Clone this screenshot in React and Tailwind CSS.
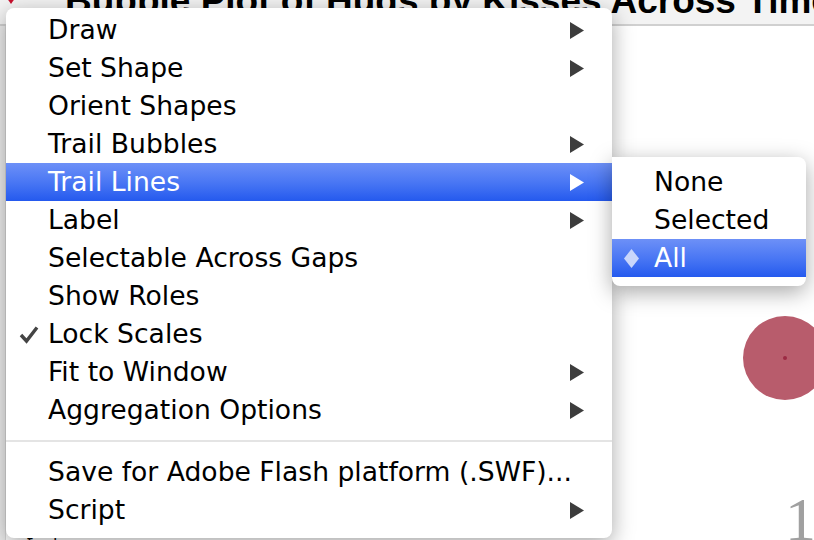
import React from "react";

const items = [
  { label: "Draw", sub: true },
  { label: "Set Shape", sub: true },
  { label: "Orient Shapes" },
  { label: "Trail Bubbles", sub: true },
  { label: "Trail Lines", sub: true, active: true },
  { label: "Label", sub: true },
  { label: "Selectable Across Gaps" },
  { label: "Show Roles" },
  { label: "Lock Scales", checked: true },
  { label: "Fit to Window", sub: true },
  { label: "Aggregation Options", sub: true },
];

function Arrow({ light }) {
  return (
    <svg width="16" height="17" viewBox="0 0 16 17" className="ml-auto mr-[27px]">
      <polygon points="1,0 15,8.5 1,17" fill={light ? "#ffffff" : "#3d3d3d"} />
    </svg>
  );
}

function Row({ item }) {
  return (
    <div
      className={
        "relative h-[38px] flex items-center pl-[42px] " +
        (item.active
          ? "bg-gradient-to-b from-[#6d90f7] via-[#4a77f4] to-[#2459ee] text-white"
          : "text-black")
      }
    >
      {item.checked && (
        <svg width="20" height="18" viewBox="0 0 20 18" className="absolute left-[13px] top-[11px]">
          <path d="M2 9 L7.5 15 L18 1.5" fill="none" stroke="#444" strokeWidth="3.4" />
        </svg>
      )}
      <span>{item.label}</span>
      {item.sub && <Arrow light={item.active} />}
    </div>
  );
}

export default function App() {
  return (
    <div className="relative w-[814px] h-[540px] bg-white overflow-hidden font-['DejaVu_Sans',sans-serif]">
      {/* window title strip */}
      <div className="absolute left-0 top-0 w-full h-[26px] bg-[#f3f3f3] border-b-2 border-[#d0d0d0] overflow-hidden">
        <div className="absolute left-[4px] top-[-6px] w-0 h-0 border-l-[7px] border-r-[7px] border-t-[10px] border-l-transparent border-r-transparent border-t-[#c8102e]" />
        <div className="absolute left-[65px] top-[-27px] whitespace-nowrap font-['Liberation_Sans',sans-serif] font-bold text-[37px] text-black">
          Bubble Plot of Hugs by Kisses Across Time
        </div>
      </div>
      <div className="absolute left-0 top-[26px] w-[6px] h-full bg-[#ececec] border-r border-[#d8d8d8]" />

      {/* chart leftovers */}
      <div className="absolute left-[743px] top-[316px] w-[84px] h-[84px] rounded-full bg-[#b85c6c]">
        <div className="absolute left-[40px] top-[40px] w-[4px] h-[4px] rounded-full bg-[#9c2a44]" />
      </div>
      <div className="absolute left-[785px] top-[488px] font-['Liberation_Serif',serif] text-[62px] leading-none text-[#a0a0a0]">
        1
      </div>
      <div className="absolute left-[22px] top-[530px] text-[16px] text-black">·f·. ·l·</div>

      {/* main menu */}
      <div className="absolute left-[6px] top-[8px] w-[606px] h-[530px] flex flex-col bg-white rounded-[8px] shadow-[0_6px_22px_rgba(0,0,0,0.35)] pt-[3px] text-[26.6px] leading-none">
        {items.map((it) => (
          <Row key={it.label} item={it} />
        ))}
        <div className="h-[24px] flex items-center">
          <div className="w-full h-[2px] bg-[#e4e4e4]" />
        </div>
        <Row item={{ label: "Save for Adobe Flash platform (.SWF)..." }} />
        <Row item={{ label: "Script", sub: true }} />
      </div>

      {/* submenu */}
      <div className="absolute left-[612px] top-[157px] w-[194px] h-[129px] flex flex-col bg-white rounded-r-[8px] rounded-bl-[8px] shadow-[0_6px_22px_rgba(0,0,0,0.35)] pt-[6px] text-[26.6px] leading-none">
        <div className="h-[38px] flex items-center pl-[42px] text-black">None</div>
        <div className="h-[38px] flex items-center pl-[42px] text-black">Selected</div>
        <div className="h-[38px] flex items-center gap-[15px] pl-[12px] text-white bg-gradient-to-b from-[#6d90f7] via-[#4a77f4] to-[#2459ee]">
          <svg width="15" height="19" viewBox="0 0 15 19">
            <polygon points="7.5,0 15,9.5 7.5,19 0,9.5" fill="#c9d6fb" />
          </svg>
          <span>All</span>
        </div>
      </div>
    </div>
  );
}
